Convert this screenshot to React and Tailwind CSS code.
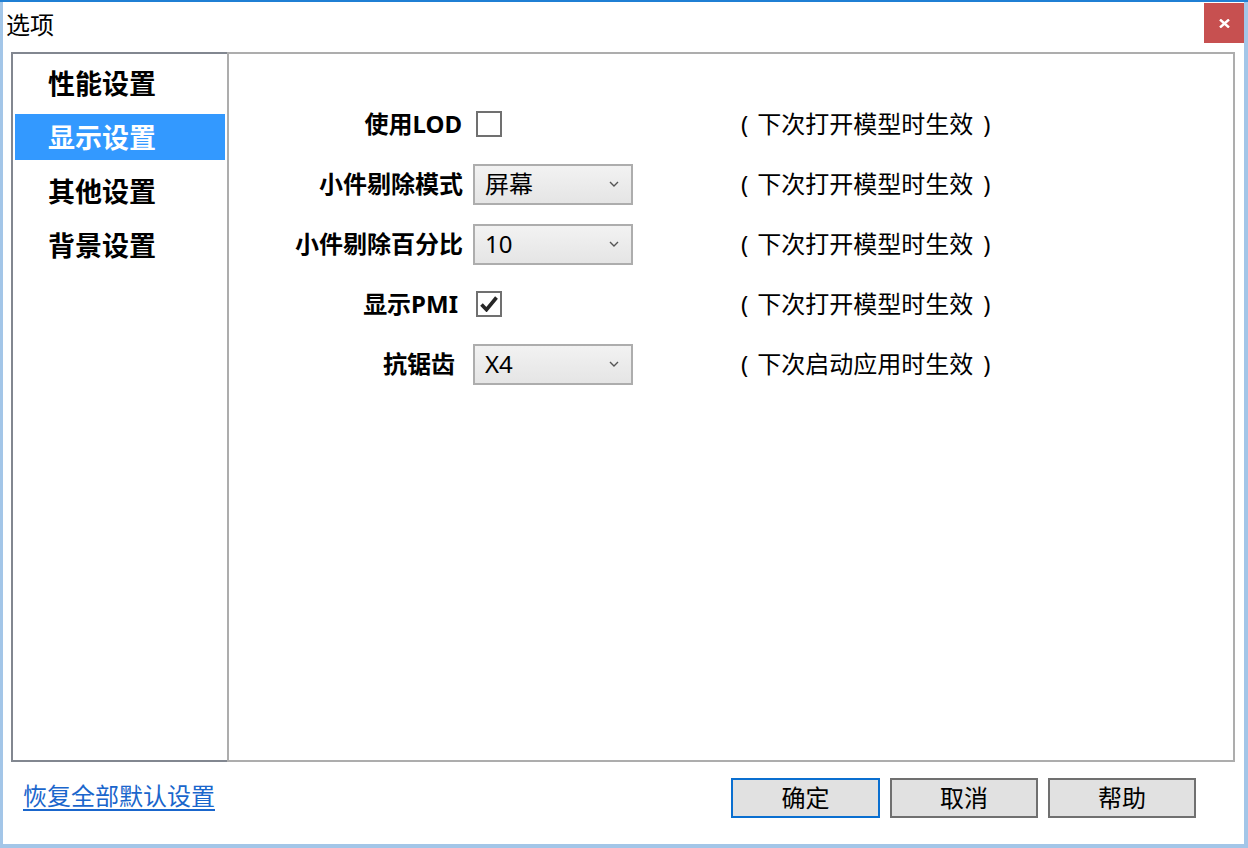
import { useState } from "react";

const navItems = ["性能设置", "显示设置", "其他设置", "背景设置"];

function Dropdown({ value }) {
  return (
    <div className="flex h-[41px] w-[160px] items-center justify-between border-2 border-[#adadad] bg-gradient-to-b from-[#f2f2f2] to-[#e5e5e5] pl-[10px] pr-[12px]">
      <span className="text-[24px] leading-none text-black">{value}</span>
      <svg width="10" height="6" viewBox="0 0 10 6" className="text-[#555]">
        <path d="M1 1l4 4 4-4" fill="none" stroke="currentColor" strokeWidth="1.4" />
      </svg>
    </div>
  );
}

function Checkbox({ checked }) {
  return (
    <div className="ml-[3px] flex h-[26px] w-[26px] items-center justify-center border-2 border-[#707070] bg-white">
      {checked && (
        <svg width="18" height="16" viewBox="0 0 18 16">
          <path d="M1.5 8.5l5 5.2L16.5 1.5" fill="none" stroke="#262626" strokeWidth="3.6" />
        </svg>
      )}
    </div>
  );
}

const rows = [
  { label: "使用LOD", control: <Checkbox checked={false} />, hint: "下次打开模型时生效", pad: "pr-[1px]" },
  { label: "小件剔除模式", control: <Dropdown value="屏幕" />, hint: "下次打开模型时生效", pad: "pr-0" },
  { label: "小件剔除百分比", control: <Dropdown value="10" />, hint: "下次打开模型时生效", pad: "pr-0" },
  { label: "显示PMI", control: <Checkbox checked />, hint: "下次打开模型时生效", pad: "pr-[5px]" },
  { label: "抗锯齿", control: <Dropdown value="X4" />, hint: "下次启动应用时生效", pad: "pr-[8px]" },
];

export default function App() {
  const [active, setActive] = useState(1);

  return (
    <div className="h-[848px] w-[1248px] border-t-2 border-[#1f7fd4] bg-[#a3c6e8] pb-[4px] pl-[3px] pr-[4px] font-['Noto_Sans','Noto_Sans_CJK_SC',sans-serif] text-black">
      <div className="flex h-full flex-col bg-white">
        {/* title bar */}
        <div className="flex h-[50px] shrink-0 items-start justify-between">
          <span className="pl-[3px] pt-[8px] text-[24px] leading-[30px]">选项</span>
          <button
            type="button"
            className="mt-px flex h-[40px] w-[40px] items-center justify-center bg-[#c75050] text-white"
          >
            <svg width="11" height="9" viewBox="0 0 11 9">
              <path d="M1 0.5l9 8M10 0.5l-9 8" stroke="white" strokeWidth="2.4" />
            </svg>
          </button>
        </div>

        {/* main panel */}
        <div className="ml-[8px] mr-[9px] flex h-[710px] shrink-0">
          <div className="flex w-[216px] flex-col gap-[8px] border-y-2 border-l-2 border-[#828790] px-[2px] pt-[6px]">
            {navItems.map((item, i) => (
              <div
                key={item}
                onClick={() => setActive(i)}
                className={`flex h-[46px] items-center pl-[33px] text-[27px] font-bold leading-none ${
                  i === active ? "bg-[#3399ff] text-white" : "text-black"
                }`}
              >
                {item}
              </div>
            ))}
          </div>
          <div className="flex flex-1 flex-col border-2 border-[#adadad] pt-[40px]">
            {rows.map((row) => (
              <div key={row.label} className="flex h-[60px] items-center">
                <div className={`w-[234px] text-right text-[24px] font-bold leading-none ${row.pad}`}>{row.label}</div>
                <div className="ml-[10px] w-[160px]">{row.control}</div>
                <div className="ml-[108px] flex items-center text-[24px] leading-none">
                  <span>(</span>
                  <span className="ml-[9px]">{row.hint}</span>
                  <span className="ml-[10px]">)</span>
                </div>
              </div>
            ))}
          </div>
        </div>

        {/* bottom bar */}
        <div className="flex flex-1 items-start justify-between pl-[20px] pr-[48px] pt-[16px]">
          <a href="#" className="mt-[6px] text-[24px] leading-none text-[#1a66cc] underline underline-offset-4">
            恢复全部默认设置
          </a>
          <div className="flex gap-[10px]">
            <button type="button" className="h-[40px] w-[149px] border-2 border-[#0a6fd0] bg-[#e1e1e1] text-[24px] leading-none">
              确定
            </button>
            <button type="button" className="h-[40px] w-[148px] border-2 border-[#707070] bg-[#e1e1e1] text-[24px] leading-none">
              取消
            </button>
            <button type="button" className="h-[40px] w-[148px] border-2 border-[#707070] bg-[#e1e1e1] text-[24px] leading-none">
              帮助
            </button>
          </div>
        </div>
      </div>
    </div>
  );
}
